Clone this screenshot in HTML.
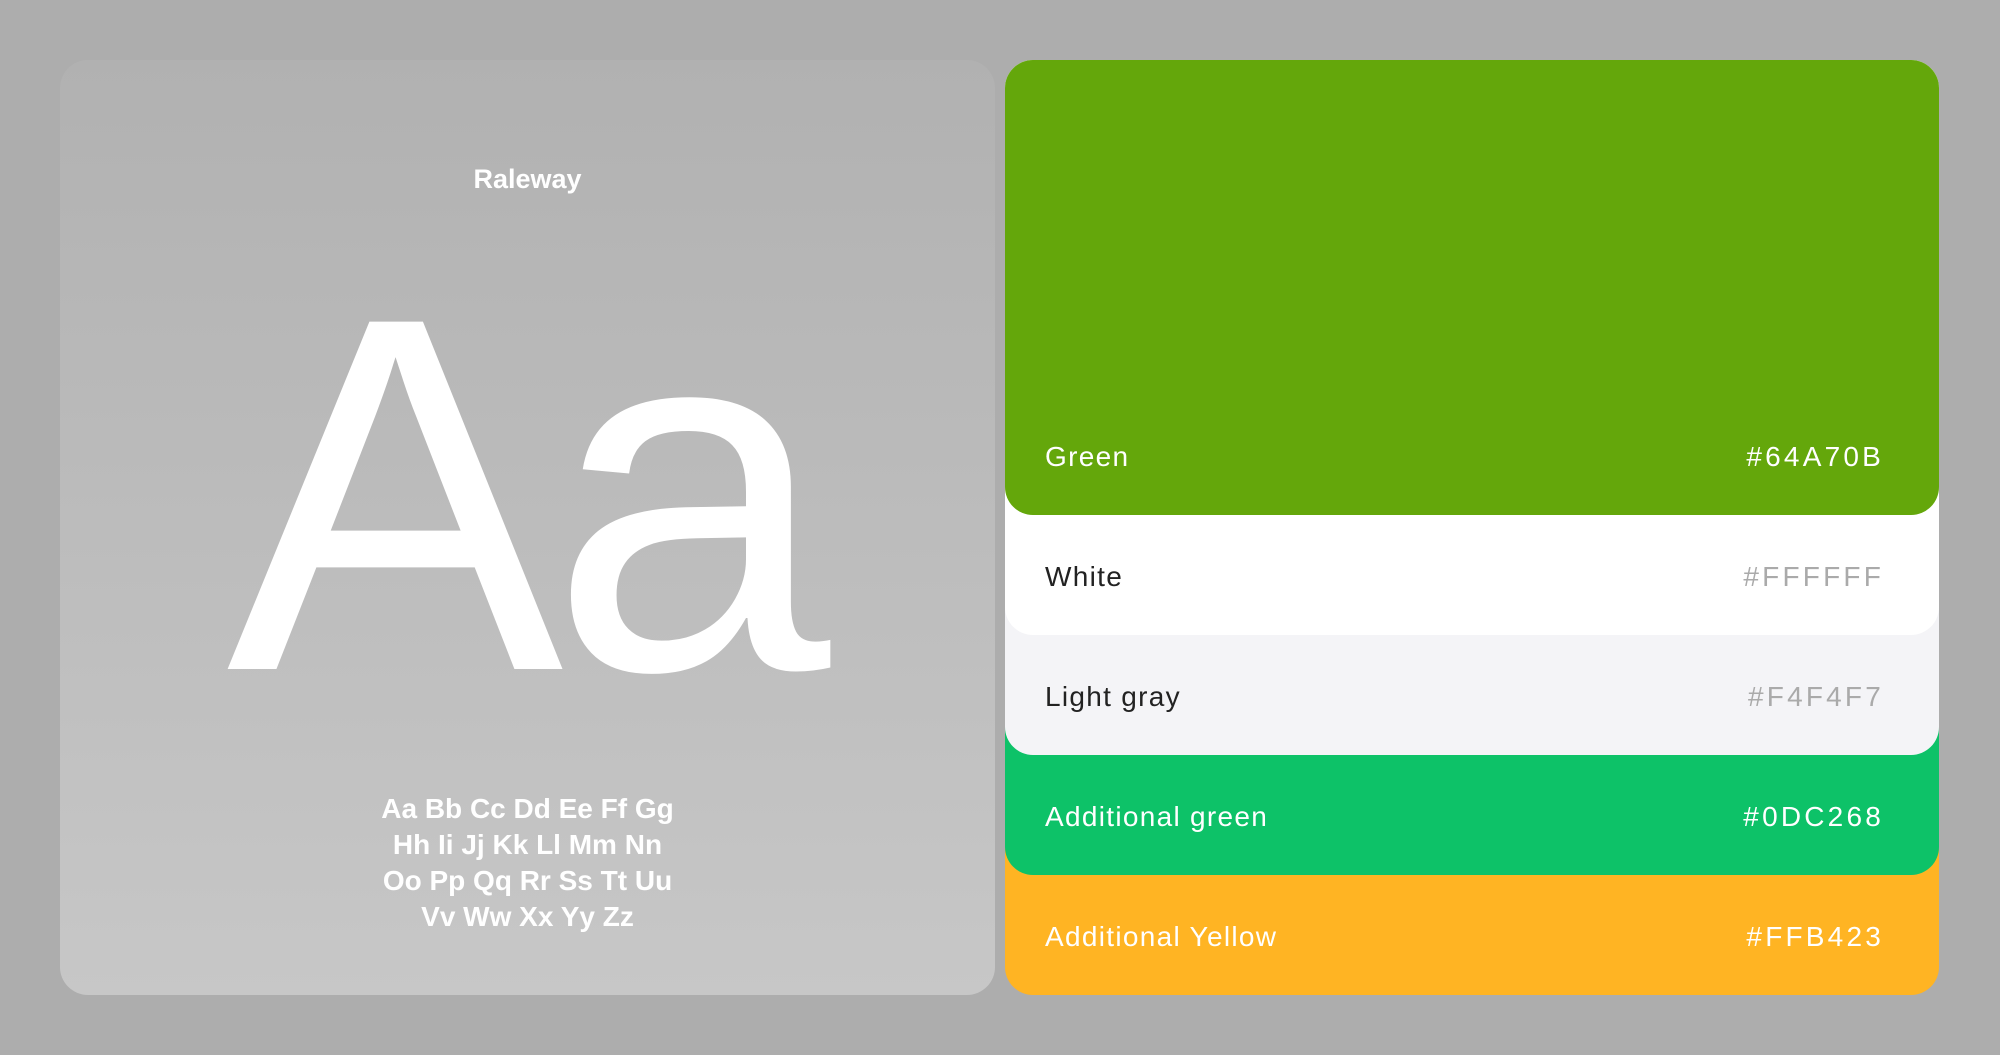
<!DOCTYPE html>
<html><head><meta charset="utf-8"><style>
html,body{margin:0;padding:0}
body{width:2000px;height:1055px;background:#adadad;position:relative;overflow:hidden;font-family:"Liberation Sans",sans-serif}
.left{position:absolute;left:60px;top:60px;width:935px;height:935px;border-radius:28px;background:linear-gradient(#b1b1b1,#c7c7c7)}
.title{position:absolute;left:0;width:100%;top:106px;text-align:center;color:#fff;font-size:27px;font-weight:bold;line-height:1}
.aa{position:absolute;left:0;width:100%;top:183px;text-align:center;color:#fff;font-size:505px;line-height:505px;letter-spacing:-14px;transform:translateX(-6px)}
.alpha{position:absolute;left:0;width:100%;top:731px;text-align:center;color:#fff;font-size:28px;line-height:36px;font-weight:bold;letter-spacing:0px}
.band{position:absolute;left:1005px;width:934px;top:60px;border-radius:28px}
.band span{position:absolute;bottom:44px;font-size:28px;line-height:1}
.band .n{left:40px;letter-spacing:1.3px}
.band .h{right:56px;letter-spacing:3.2px;margin-right:-1px}
</style></head><body>
<div class="left">
<div class="title">Raleway</div>
<div class="aa">Aa</div>
<div class="alpha">Aa Bb Cc Dd Ee Ff Gg<br>Hh Ii Jj Kk Ll Mm Nn<br>Oo Pp Qq Rr Ss Tt Uu<br>Vv Ww Xx Yy Zz</div>
</div>
<div class="band" style="height:935px;background:#ffb423;z-index:1;color:#fff"><span class="n">Additional Yellow</span><span class="h">#FFB423</span></div>
<div class="band" style="height:815px;background:#0dc268;z-index:2;color:#fff"><span class="n">Additional green</span><span class="h">#0DC268</span></div>
<div class="band" style="height:695px;background:#f4f4f7;z-index:3;color:#222"><span class="n">Light gray</span><span class="h" style="color:#aaa">#F4F4F7</span></div>
<div class="band" style="height:575px;background:#ffffff;z-index:4;color:#222"><span class="n">White</span><span class="h" style="color:#aaa">#FFFFFF</span></div>
<div class="band" style="height:455px;background:#64a70b;z-index:5;color:#fff"><span class="n">Green</span><span class="h">#64A70B</span></div>
</body></html>
